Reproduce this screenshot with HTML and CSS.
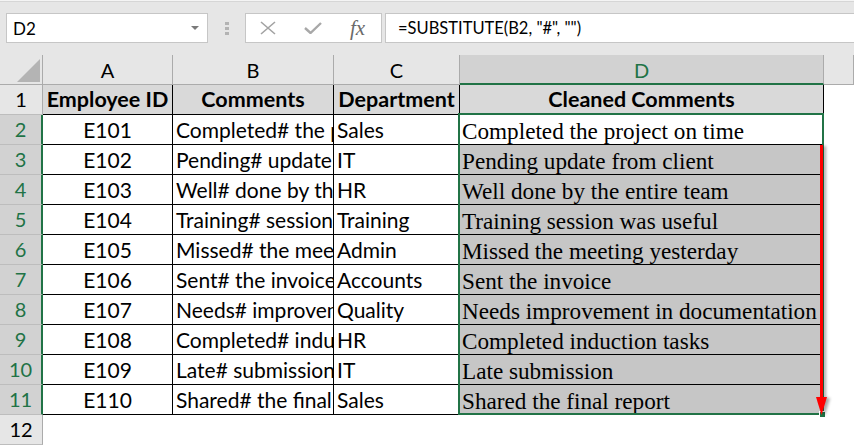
FILE: index.html
```html
<!DOCTYPE html>
<html lang="en">
<head>
    <meta charset="UTF-8">
    <meta name="viewport" content="width=device-width, initial-scale=1.0">
    <title>Cleaned Comments</title>
    <link rel="stylesheet" href="styles.css">
</head>
<body>
    <div class="toolbar">
        <div class="namebox">
            <span>D2</span>
            <span class="caret"></span>
        </div>
        <div class="grip"><i></i><i></i><i></i></div>
        <div class="fxbox">
            <svg class="ico" width="16" height="14" viewBox="0 0 16 14">
                <path d="M1 1 L15 13 M15 1 L1 13" stroke="#a3a3a3" stroke-width="1.6" fill="none"/>
            </svg>
            <svg class="ico" width="18" height="12" viewBox="0 0 18 12">
                <path d="M1 6 L6.5 11 L17 1" stroke="#a8a8a8" stroke-width="2.4" fill="none"/>
            </svg>
            <span class="fx">fx</span>
        </div>
        <div class="formula">=SUBSTITUTE(B2, "#", "")</div>
    </div>

    <div class="sheet">
        <div class="corner"><span class="tri"></span></div>
        <div class="colhead">A</div>
        <div class="colhead">B</div>
        <div class="colhead">C</div>
        <div class="colhead sel">D</div>
        <div class="colhead"></div>

        <div class="rowhead">1</div>
        <div class="cell th">Employee ID</div>
        <div class="cell th">Comments</div>
        <div class="cell th">Department</div>
        <div class="cell th">Cleaned Comments</div>
        <div class="blank"></div>

        <div class="rowhead sel">2</div>
        <div class="cell mid">E101</div>
        <div class="cell">Completed# the project on time</div>
        <div class="cell">Sales</div>
        <div class="cell serif">Completed the project on time</div>
        <div class="blank"></div>

        <div class="rowhead sel">3</div>
        <div class="cell mid">E102</div>
        <div class="cell">Pending# update from client</div>
        <div class="cell">IT</div>
        <div class="cell serif shade">Pending update from client</div>
        <div class="blank"></div>

        <div class="rowhead sel">4</div>
        <div class="cell mid">E103</div>
        <div class="cell">Well# done by the entire team</div>
        <div class="cell">HR</div>
        <div class="cell serif shade">Well done by the entire team</div>
        <div class="blank"></div>

        <div class="rowhead sel">5</div>
        <div class="cell mid">E104</div>
        <div class="cell">Training# session was useful</div>
        <div class="cell">Training</div>
        <div class="cell serif shade">Training session was useful</div>
        <div class="blank"></div>

        <div class="rowhead sel">6</div>
        <div class="cell mid">E105</div>
        <div class="cell">Missed# the meeting yesterday</div>
        <div class="cell">Admin</div>
        <div class="cell serif shade">Missed the meeting yesterday</div>
        <div class="blank"></div>

        <div class="rowhead sel">7</div>
        <div class="cell mid">E106</div>
        <div class="cell">Sent# the invoice</div>
        <div class="cell">Accounts</div>
        <div class="cell serif shade">Sent the invoice</div>
        <div class="blank"></div>

        <div class="rowhead sel">8</div>
        <div class="cell mid">E107</div>
        <div class="cell">Needs# improvement in documentation</div>
        <div class="cell">Quality</div>
        <div class="cell serif shade">Needs improvement in documentation</div>
        <div class="blank"></div>

        <div class="rowhead sel">9</div>
        <div class="cell mid">E108</div>
        <div class="cell">Completed# induction tasks</div>
        <div class="cell">HR</div>
        <div class="cell serif shade">Completed induction tasks</div>
        <div class="blank"></div>

        <div class="rowhead sel">10</div>
        <div class="cell mid">E109</div>
        <div class="cell">Late# submission</div>
        <div class="cell">IT</div>
        <div class="cell serif shade">Late submission</div>
        <div class="blank"></div>

        <div class="rowhead sel">11</div>
        <div class="cell mid">E110</div>
        <div class="cell">Shared# the final report</div>
        <div class="cell">Sales</div>
        <div class="cell serif shade">Shared the final report</div>
        <div class="blank"></div>

        <div class="rowhead">12</div>
        <div class="blank"></div>
        <div class="blank"></div>
        <div class="blank"></div>
        <div class="blank"></div>
        <div class="blank"></div>

        <!-- selection box, fill handle and the drag arrow sit on top of the grid -->
        <div class="selection"></div>
        <div class="handle"></div>
        <svg class="arrow" width="18" height="274" viewBox="0 0 18 274">
            <rect x="6" y="0" width="3" height="256" fill="#ff0000"/>
            <polygon points="2,252 13,252 7.5,270" fill="#ff0000"/>
        </svg>
    </div>
</body>
</html>
```

FILE: styles.css
```css
*{
    margin:0;
    padding:0;
    box-sizing: border-box;
}
body{
    width:854px;
    height:447px;
    overflow:hidden;
    background:#ffffff;
    font-family: Lato, "Liberation Sans", sans-serif;
    color:#000;
}

/* formula bar */
.toolbar{
    height:55px;
    background:#e6e6e6;
    display:flex;
    align-items:flex-start;
    padding:13px 0 0 6px;
    box-shadow: inset 0 1px #f4f4f4, inset 0 2px #d6d6d6;
}
.namebox{
    width:202px;
    height:30px;
    background:#fff;
    border:1px solid #c6c6c6;
    display:flex;
    align-items:center;
    justify-content:space-between;
    padding:0 8px 0 6px;
    font-size:17px;
}
.caret{
    width:0;
    height:0;
    border-left:4px solid transparent;
    border-right:4px solid transparent;
    border-top:4px solid #7a7a7a;
}
.grip{
    width:4px;
    height:30px;
    margin:0 16px 0 17px;
    display:flex;
    flex-direction:column;
    justify-content:center;
    gap:2px;
}
.grip i{
    display:block;
    width:4px;
    height:3px;
    background:#b3b3b3;
}
.fxbox{
    width:137px;
    height:30px;
    background:#fff;
    border:1px solid #c6c6c6;
    display:flex;
    align-items:center;
    padding-left:14px;
    gap:28px;
}
.fx{
    font-family: "Liberation Serif", serif;
    font-style:italic;
    font-size:21px;
    color:#6a6a6a;
}
.formula{
    flex:1;
    height:30px;
    margin-left:3px;
    background:#fff;
    border:1px solid #c6c6c6;
    border-right:0;
    padding-left:12px;
    font-size:16.5px;
    line-height:28px;
}

/* grid */
.sheet{
    position:relative;
    display:grid;
    grid-template-columns: 43px 130px 161px 126px 364px 30px;
    grid-auto-rows:30px;
}
.corner{
    position:relative;
    background:#e6e6e6;
    border-right:1px solid #ababab;
    border-bottom:1px solid #ababab;
}
.tri{
    position:absolute;
    right:2px;
    bottom:2px;
    width:0;
    height:0;
    border-left:23px solid transparent;
    border-bottom:23px solid #b4b4b4;
}
.colhead{
    background:#e6e6e6;
    border-right:1px solid #ababab;
    border-bottom:1px solid #ababab;
    text-align:center;
    font-size:20px;
    line-height:28px;
    padding-top:1px;
}
.colhead.sel{
    background:#d2d2d2;
    color:#217346;
    border-bottom:2px solid #217346;
}
.rowhead{
    background:#e6e6e6;
    border-right:1px solid #ababab;
    border-bottom:1px solid #bdbdbd;
    text-align:center;
    font-size:20px;
    line-height:29px;
}
.rowhead.sel{
    background:#d2d2d2;
    color:#217346;
    border-right:2px solid #217346;
}
.cell{
    border-right:1px solid #000;
    border-bottom:1px solid #000;
    font-size:21px;
    line-height:29px;
    padding-left:3px;
    white-space:nowrap;
    overflow:hidden;
}
.cell.th{
    background:#d9d9d9;
    font-weight:700;
    text-align:center;
    padding-left:0;
    font-size:21.5px;
}
.cell.mid{
    text-align:center;
    padding-left:0;
}
.cell.serif{
    font-family: "Liberation Serif", serif;
    font-size:23.2px;
    padding-left:2px;
    line-height:32px;
}
.cell.shade{
    background:#c6c6c6;
}

.selection{
    position:absolute;
    left:458px;
    top:58px;
    width:366px;
    height:302px;
    border:2px solid #217346;
}
.handle{
    position:absolute;
    left:819px;
    top:356px;
    width:7px;
    height:7px;
    background:#217346;
    border:1px solid #fff;
}
.arrow{
    position:absolute;
    left:814px;
    top:90px;
    filter: drop-shadow(3px 1px 1.5px rgba(0,0,0,0.35));
}
```
